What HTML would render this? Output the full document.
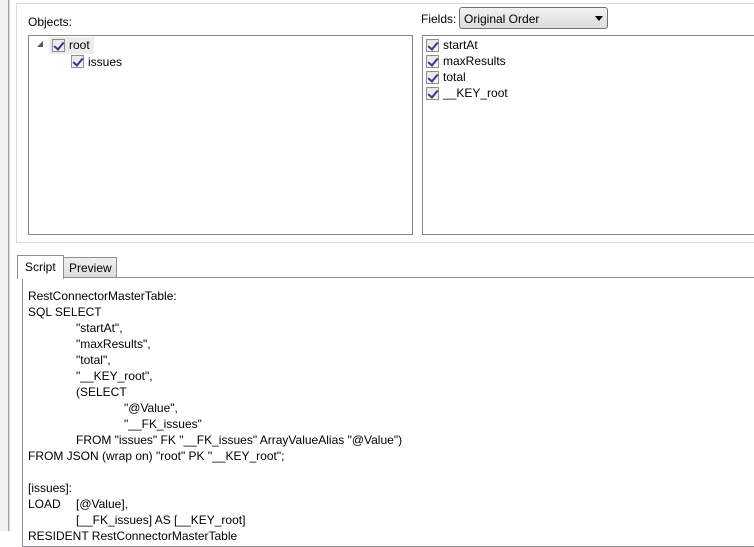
<html><head><style>
body{margin:0;width:754px;height:531px;background:#fff;position:relative;overflow:hidden;font-family:"Liberation Sans",sans-serif;font-size:12px;color:#000}
div{position:absolute;box-sizing:border-box}
.t{white-space:pre;line-height:16px}
.cb{width:13px;height:13px;border:1px solid #8e8f8f;background:linear-gradient(#e8e8e8,#f6f6f6);}
.cb:after{content:"";position:absolute;left:3px;top:0px;width:4px;height:8px;border-right:2px solid #2b3a8a;border-bottom:2px solid #2b3a8a;transform:rotate(40deg)}
</style></head><body>
<div style="left:0;top:0;width:9px;height:531px;background:#f0f0f0;border-right:1px solid #a0a0a0"></div>
<div style="left:9px;top:0;width:1px;height:531px;background:#dcdcdc"></div>
<div style="left:16px;top:3px;width:740px;height:240px;border:1px solid #dadada;border-right:none"></div>
<div class="t" style="left:28px;top:14px">Objects:</div>
<div style="left:28px;top:35px;width:385px;height:200px;border:1px solid #828790"></div>
<div style="left:37px;top:41px;width:0;height:0;border-left:6px solid transparent;border-bottom:6px solid #555"></div>
<div style="left:49px;top:37px;width:45px;height:17px;background:#ececec"></div>
<div class="cb" style="left:52px;top:39px"></div>
<div class="t" style="left:69px;top:37px">root</div>
<div class="cb" style="left:71px;top:55px"></div>
<div class="t" style="left:88px;top:54px">issues</div>
<div class="t" style="left:421px;top:11px">Fields:</div>
<div style="left:459px;top:7px;width:149px;height:22px;border:1px solid #707070;border-radius:3px;background:linear-gradient(#f2f2f2,#dcdcdc)"></div>
<div class="t" style="left:464px;top:11px">Original Order</div>
<div style="left:595px;top:16px;width:0;height:0;border-left:4px solid transparent;border-right:4px solid transparent;border-top:5px solid #000"></div>
<div style="left:422px;top:35px;width:340px;height:200px;border:1px solid #828790"></div>
<div class="cb" style="left:426px;top:39px"></div><div class="t" style="left:443px;top:37px">startAt</div>
<div class="cb" style="left:426px;top:55px"></div><div class="t" style="left:443px;top:53px">maxResults</div>
<div class="cb" style="left:426px;top:71px"></div><div class="t" style="left:443px;top:69px">total</div>
<div class="cb" style="left:426px;top:87px"></div><div class="t" style="left:443px;top:85px">__KEY_root</div>
<div style="left:63px;top:257px;width:54px;height:21px;border:1px solid #8c8e94;background:linear-gradient(#f0f0f0,#dcdcdc)"></div>
<div class="t" style="left:69px;top:260px">Preview</div>
<div style="left:22px;top:277px;width:740px;height:270px;border:1px solid #8c8e94"></div>
<div style="left:17px;top:255px;width:47px;height:24px;border:1px solid #8c8e94;border-bottom:none;background:#fff"></div>
<div class="t" style="left:25px;top:259px">Script</div>
<div class="t" style="left:28px;top:288px">RestConnectorMasterTable:</div>
<div class="t" style="left:28px;top:304px">SQL SELECT</div>
<div class="t" style="left:76px;top:320px">"startAt",</div>
<div class="t" style="left:76px;top:336px">"maxResults",</div>
<div class="t" style="left:76px;top:352px">"total",</div>
<div class="t" style="left:76px;top:368px">"__KEY_root",</div>
<div class="t" style="left:76px;top:384px">(SELECT</div>
<div class="t" style="left:124px;top:400px">"@Value",</div>
<div class="t" style="left:124px;top:416px">"__FK_issues"</div>
<div class="t" style="left:76px;top:432px">FROM "issues" FK "__FK_issues" ArrayValueAlias "@Value")</div>
<div class="t" style="left:28px;top:448px">FROM JSON (wrap on) "root" PK "__KEY_root";</div>
<div class="t" style="left:28px;top:480px">[issues]:</div>
<div class="t" style="left:28px;top:496px">LOAD</div>
<div class="t" style="left:76px;top:496px">[@Value],</div>
<div class="t" style="left:76px;top:512px">[__FK_issues] AS [__KEY_root]</div>
<div class="t" style="left:28px;top:528px">RESIDENT RestConnectorMasterTable</div>
</body></html>
